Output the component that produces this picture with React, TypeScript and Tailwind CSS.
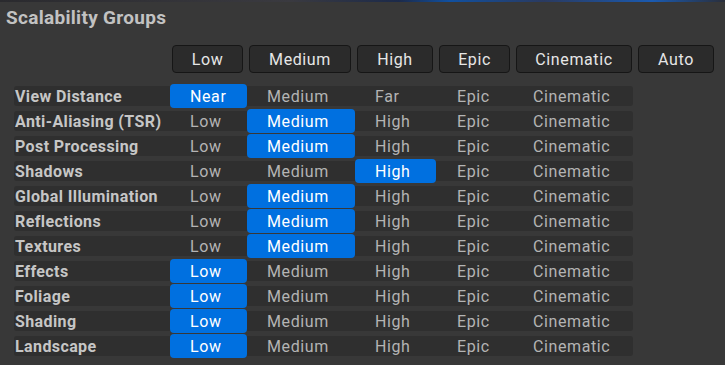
const levels = ["Low", "Medium", "High", "Epic", "Cinematic"];

const colCls = [
  "w-[77px] pl-[20px]",
  "w-[108px] pl-[20px]",
  "w-[81px] pl-[20px]",
  "w-[74px] pl-[21px]",
  "w-[123px] pl-[23px]",
];

const rows = [
  { name: "View Distance", sel: 0, labels: ["Near", "Medium", "Far", "Epic", "Cinematic"] },
  { name: "Anti-Aliasing (TSR)", sel: 1 },
  { name: "Post Processing", sel: 1 },
  { name: "Shadows", sel: 2 },
  { name: "Global Illumination", sel: 1 },
  { name: "Reflections", sel: 1 },
  { name: "Textures", sel: 1 },
  { name: "Effects", sel: 0 },
  { name: "Foliage", sel: 0 },
  { name: "Shading", sel: 0 },
  { name: "Landscape", sel: 0 },
];

const buttons = [
  { label: "Low", w: "w-[71px]" },
  { label: "Medium", w: "w-[102px]" },
  { label: "High", w: "w-[76px]" },
  { label: "Epic", w: "w-[71px]" },
  { label: "Cinematic", w: "w-[116px]" },
  { label: "Auto", w: "w-[76px]" },
];

export default function App() {
  return (
    <div className="w-[725px] h-[365px] overflow-hidden bg-[#383838] font-['Roboto',sans-serif]">
      {/* strip of the viewport above the panel */}
      <div className="h-[2px] bg-[linear-gradient(90deg,#2a2a2e_0%,#3a3a40_40%,#1c2a4a_55%,#1050a0_62%,#2a3a60_75%,#1a5ab0_90%,#2a2e3a_100%)]" />

      <h1 className="pl-[6px] pt-[4px] h-[43px] text-[19px] leading-[24px] font-bold tracking-[0.3px] text-[#c2c2c2]">
        Scalability Groups
      </h1>

      {/* preset buttons */}
      <div className="flex gap-[6px] pl-[172px]">
        {buttons.map((b) => (
          <div
            key={b.label}
            className={`${b.w} h-[28px] pt-[1px] flex items-center justify-center rounded-[4px] border border-[#161616] bg-[#2b2b2b] text-[16px] tracking-[0.6px] text-[#e6e6e6]`}
          >
            {b.label}
          </div>
        ))}
      </div>

      {/* group rows */}
      <div className="mt-[13px] flex flex-col gap-[5px] pl-[14px]">
        {rows.map((r) => (
          <div key={r.name} className="w-[619px] h-[20px] flex items-center rounded-[3px] bg-[#2f2f2f]">
            <div className="w-[156px] pl-[1px] pt-[1px] text-[16px] font-bold tracking-[0.4px] text-[#c6c6c6] leading-[20px] whitespace-nowrap">
              {r.name}
            </div>
            {levels.map((lv, i) => {
              const text = r.labels ? r.labels[i] : lv;
              const on = r.sel === i;
              return (
                <div
                  key={lv}
                  className={`${colCls[i]} pt-[1px] flex items-center text-[16px] tracking-[0.6px] ${
                    on
                      ? "h-[24px] rounded-[4px] bg-[#0070e0] text-white"
                      : "h-[20px] text-[#b4b4b4]"
                  }`}
                >
                  {text}
                </div>
              );
            })}
          </div>
        ))}
      </div>
    </div>
  );
}
